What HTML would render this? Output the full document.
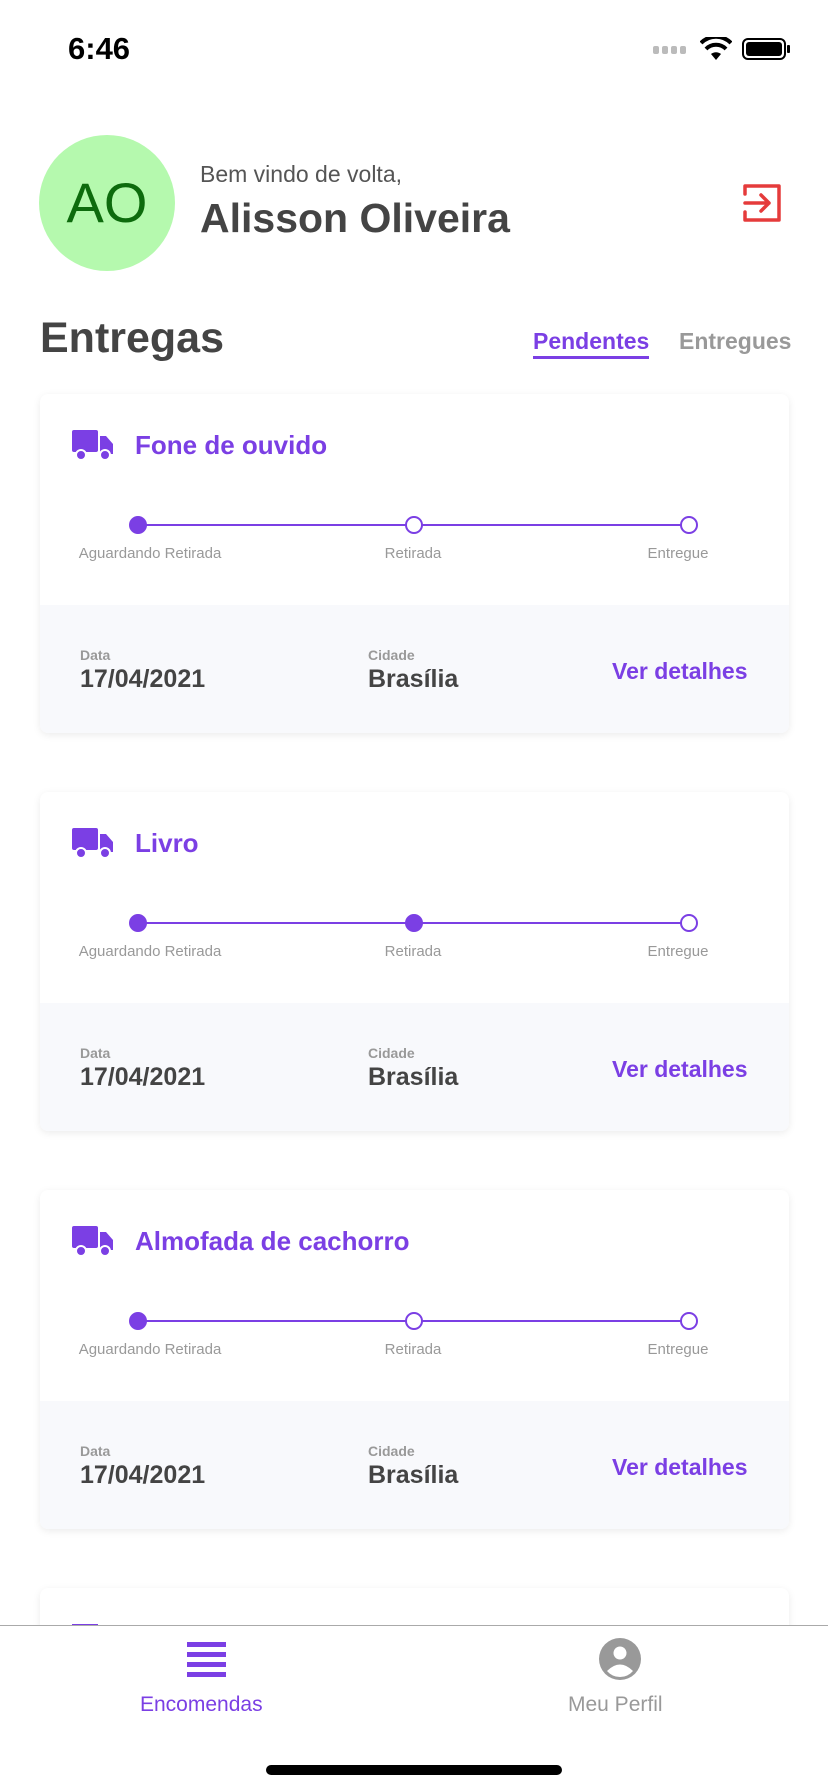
<!DOCTYPE html>
<html style="width:828px;height:1792px;overflow:hidden"><head><meta charset="utf-8"><style>
*{margin:0;padding:0;box-sizing:border-box}
body{width:828px;height:1792px;background:#fff;font-family:"Liberation Sans",sans-serif;position:relative;overflow:hidden;color:#444}
.abs{position:absolute}
.card{position:absolute;left:40px;width:749px;height:339px;border-radius:8px;background:#fff;box-shadow:0 2px 8px rgba(0,0,0,.08);overflow:hidden}
.card .bot{position:absolute;left:0;top:211px;width:100%;height:128px;background:#f8f9fc}
.title{position:absolute;left:95px;top:36px;font-size:26px;font-weight:bold;color:#7b3fe4}
.truck{position:absolute;left:32px;top:36px}
.line{position:absolute;left:98px;top:130px;width:551px;height:2px;background:#7b3fe4}
.dot{position:absolute;top:122px;width:18px;height:18px;border-radius:50%;border:2px solid #7b3fe4;background:#fff}
.dot.f{background:#7b3fe4}
.lbl{position:absolute;top:151px;font-size:15px;color:#999;transform:translateX(-50%);white-space:nowrap}
.sm{position:absolute;top:253px;font-size:14px;font-weight:bold;color:#999}
.big{position:absolute;top:271px;font-size:25px;font-weight:bold;color:#444}
.ver{position:absolute;left:572px;top:264px;font-size:23px;font-weight:bold;color:#7b3fe4}
</style></head><body>
<div class="abs" style="left:68px;top:31px;font-size:31px;font-weight:bold;color:#000">6:46</div>
<div class="abs" style="left:653px;top:46px;width:38px;height:8px;display:flex;gap:3px"><i style="width:6px;height:8px;background:#bbb;border-radius:2px"></i><i style="width:6px;height:8px;background:#bbb;border-radius:2px"></i><i style="width:6px;height:8px;background:#bbb;border-radius:2px"></i><i style="width:6px;height:8px;background:#bbb;border-radius:2px"></i></div>
<svg class="abs" style="left:700px;top:37px" width="32" height="24" viewBox="0 0 32 24"><path d="M16 23 L11 17 A8 8 0 0 1 21 17 Z" fill="#000"/><path d="M6 12 A14 14 0 0 1 26 12" stroke="#000" stroke-width="4" fill="none"/><path d="M1 6 A21 21 0 0 1 31 6" stroke="#000" stroke-width="4" fill="none"/></svg>
<div class="abs" style="left:742px;top:38px;width:44px;height:22px;border:2px solid #000;border-radius:6px;padding:2px"><div style="width:100%;height:100%;background:#000;border-radius:3px"></div></div>
<div class="abs" style="left:787px;top:45px;width:3px;height:8px;background:#000;border-radius:1px"></div>

<div class="abs" style="left:39px;top:135px;width:136px;height:136px;border-radius:50%;background:#b5f9ae;color:#0d6b0d;font-size:56px;text-align:center;line-height:136px">AO</div>
<div class="abs" style="left:200px;top:161px;font-size:23px;color:#555">Bem vindo de volta,</div>
<div class="abs" style="left:200px;top:195px;font-size:41px;font-weight:bold;color:#444">Alisson Oliveira</div>
<svg class="abs" style="left:742px;top:183px" width="40" height="40" viewBox="0 0 40 40" fill="none" stroke="#e53b3b" stroke-width="3.5" stroke-linejoin="round" stroke-linecap="round"><path d="M3 11 V3 H37 V37 H3 V29"/><path d="M3 20 H27 M19 12 L27 20 L19 28"/></svg>

<div class="abs" style="left:40px;top:314px;font-size:43px;font-weight:bold;color:#444">Entregas</div>
<div class="abs" style="left:533px;top:328px;font-size:23px;font-weight:bold;color:#7b3fe4">Pendentes</div>
<div class="abs" style="left:533px;top:356px;width:116px;height:3px;background:#7b3fe4"></div>
<div class="abs" style="left:679px;top:328px;font-size:23px;font-weight:bold;color:#999">Entregues</div>

<div class="card" style="top:394px">
<svg class="truck" width="41" height="31" viewBox="0 0 41 31"><rect x="0" y="0" width="26" height="22" rx="2" fill="#7b3fe4"/><path d="M28 6 H34 L41 14 V24 H28 Z" fill="#7b3fe4"/><circle cx="9" cy="25" r="5" fill="#7b3fe4" stroke="#fff" stroke-width="2"/><circle cx="33" cy="25" r="5" fill="#7b3fe4" stroke="#fff" stroke-width="2"/></svg>
<div class="title">Fone de ouvido</div>
<div class="line"></div><div class="dot f" style="left:89px"></div><div class="dot" style="left:365px"></div><div class="dot" style="left:640px"></div>
<div class="lbl" style="left:110px">Aguardando Retirada</div><div class="lbl" style="left:373px">Retirada</div><div class="lbl" style="left:638px">Entregue</div>
<div class="bot"></div>
<div class="sm" style="left:40px">Data</div><div class="big" style="left:40px">17/04/2021</div>
<div class="sm" style="left:328px">Cidade</div><div class="big" style="left:328px">Brasília</div>
<div class="ver">Ver detalhes</div>
</div>

<div class="card" style="top:792px">
<svg class="truck" width="41" height="31" viewBox="0 0 41 31"><rect x="0" y="0" width="26" height="22" rx="2" fill="#7b3fe4"/><path d="M28 6 H34 L41 14 V24 H28 Z" fill="#7b3fe4"/><circle cx="9" cy="25" r="5" fill="#7b3fe4" stroke="#fff" stroke-width="2"/><circle cx="33" cy="25" r="5" fill="#7b3fe4" stroke="#fff" stroke-width="2"/></svg>
<div class="title">Livro</div>
<div class="line"></div><div class="dot f" style="left:89px"></div><div class="dot f" style="left:365px"></div><div class="dot" style="left:640px"></div>
<div class="lbl" style="left:110px">Aguardando Retirada</div><div class="lbl" style="left:373px">Retirada</div><div class="lbl" style="left:638px">Entregue</div>
<div class="bot"></div>
<div class="sm" style="left:40px">Data</div><div class="big" style="left:40px">17/04/2021</div>
<div class="sm" style="left:328px">Cidade</div><div class="big" style="left:328px">Brasília</div>
<div class="ver">Ver detalhes</div>
</div>

<div class="card" style="top:1190px">
<svg class="truck" width="41" height="31" viewBox="0 0 41 31"><rect x="0" y="0" width="26" height="22" rx="2" fill="#7b3fe4"/><path d="M28 6 H34 L41 14 V24 H28 Z" fill="#7b3fe4"/><circle cx="9" cy="25" r="5" fill="#7b3fe4" stroke="#fff" stroke-width="2"/><circle cx="33" cy="25" r="5" fill="#7b3fe4" stroke="#fff" stroke-width="2"/></svg>
<div class="title">Almofada de cachorro</div>
<div class="line"></div><div class="dot f" style="left:89px"></div><div class="dot" style="left:365px"></div><div class="dot" style="left:640px"></div>
<div class="lbl" style="left:110px">Aguardando Retirada</div><div class="lbl" style="left:373px">Retirada</div><div class="lbl" style="left:638px">Entregue</div>
<div class="bot"></div>
<div class="sm" style="left:40px">Data</div><div class="big" style="left:40px">17/04/2021</div>
<div class="sm" style="left:328px">Cidade</div><div class="big" style="left:328px">Brasília</div>
<div class="ver">Ver detalhes</div>
</div>

<div class="card" style="top:1588px;height:100px">
<div class="abs" style="left:32px;top:36px;width:26px;height:10px;background:#7b3fe4"></div>
</div>

<div class="abs" style="left:0;top:1625px;width:828px;height:167px;background:#fff;border-top:1px solid #aaa"></div>
<div class="abs" style="left:187px;top:1642px;width:39px">
<div style="height:5px;background:#7b3fe4;margin-bottom:5px"></div><div style="height:5px;background:#7b3fe4;margin-bottom:5px"></div><div style="height:5px;background:#7b3fe4;margin-bottom:5px"></div><div style="height:5px;background:#7b3fe4"></div></div>
<div class="abs" style="left:140px;top:1693px;font-size:21px;color:#7b3fe4">Encomendas</div>
<svg class="abs" style="left:599px;top:1638px" width="42" height="42" viewBox="0 0 42 42"><circle cx="21" cy="21" r="21" fill="#999"/><circle cx="21" cy="15" r="6.5" fill="#fff"/><path d="M8 33 Q21 20 34 33 A17 17 0 0 1 8 33 Z" fill="#fff"/></svg>
<div class="abs" style="left:568px;top:1693px;font-size:21px;color:#999">Meu Perfil</div>
<div class="abs" style="left:266px;top:1765px;width:296px;height:10px;border-radius:5px;background:#000"></div>
</body></html>
